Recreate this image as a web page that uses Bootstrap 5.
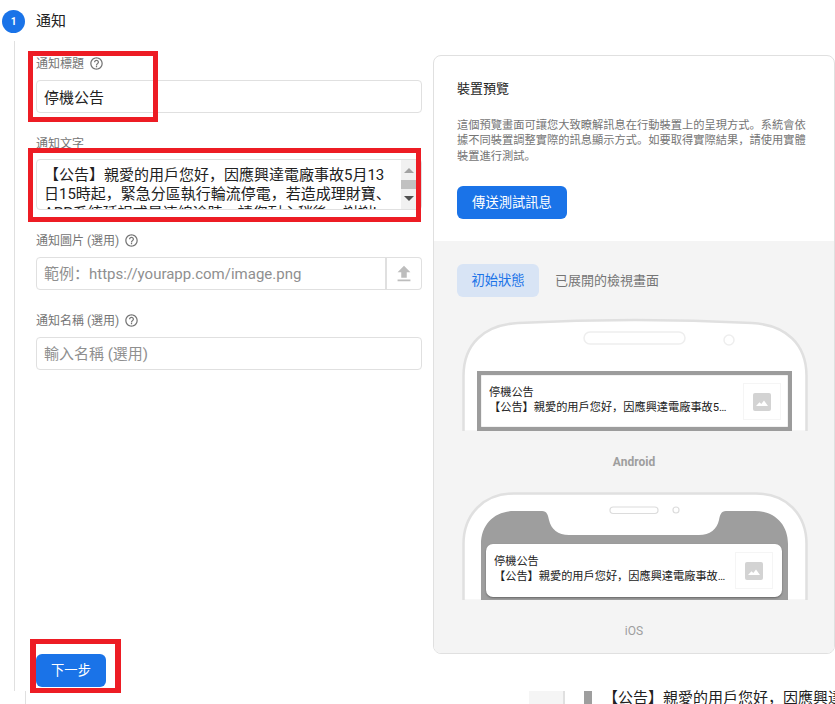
<!DOCTYPE html>
<html lang="zh">
<head>
<meta charset="utf-8">
<title>通知</title>
<link href="https://cdn.jsdelivr.net/npm/bootstrap@5.3.0/dist/css/bootstrap.min.css" rel="stylesheet">
<style>
html,body{height:704px;overflow:hidden;background:#fff}
body{font-family:Roboto,"Noto Sans CJK SC",sans-serif;color:#212121;font-size:15px}
.page-wrap{width:835px;height:704px;position:relative;overflow:hidden}
.step-head{height:41px;padding:10px 0 0 2px;gap:11px}
.step-dot{width:23px;height:23px;border-radius:50%;background:#1a73e8;color:#fff;font-size:10px;font-weight:700}
.step-title{font-size:15px;line-height:23px;color:#212121}
.step-body{margin-left:14px;border-left:1px solid #e0e0e0;height:650px;padding:14px 0 0 21px}
.form-side{width:386px;margin-right:11px}
.fld-label{font-size:12px;line-height:14px;color:#757575;margin:0 0 9px;height:16px;padding-top:2px;gap:5px}
.fld-block{margin-bottom:22px}
.help-ico{width:15px;height:15px;fill:#757575;margin-top:-2px}
.fld-input.form-control{height:33px;font-size:15px;padding:0 7px;border:1px solid #e0e0e0;border-radius:4px;color:#212121;box-shadow:none;line-height:31px}
.fld-input.form-control::placeholder{color:#8f8f8f;opacity:1}
.upload-cell.input-group-text{width:37px;padding:0;justify-content:center;background:#fff;border:1px solid #e0e0e0;border-left-width:2px;border-radius:0 4px 4px 0}
.upload-cell svg{width:22px;height:22px;fill:#bdbdbd}
.msg-box{height:51px;border:1px solid #e0e0e0;border-radius:4px;overflow:hidden;margin-top:-1px}
.msg-text{width:364px;padding:6px 0 0 7px;font-size:15px;line-height:19px;color:#212121;overflow:hidden}
.msg-text span{display:block;width:352px}
.fake-scroll{width:15px;background:#f1f1f1;flex:none;padding-top:8px;height:100%;gap:7px;margin-right:5px}
.arr-up{width:0;height:0;border:5px solid transparent;border-top:0;border-bottom:5px solid #a3a3a3;margin:0 auto}
.arr-down{width:0;height:0;border:5px solid transparent;border-bottom:0;border-top:5px solid #505050;margin:0 auto}
.thumb-bar{height:9px;background:#c1c1c1}
.gap-next{height:33px}
.act-btn.btn{background:#1a73e8;border:0;color:#fff;border-radius:6px;font-size:13.3px;height:33px;padding:0;line-height:33px}
.next-btn{width:70px}
.send-btn{width:110px}
.preview-panel{width:402px;height:599px;border:1px solid #e0e0e0;border-radius:8px;overflow:hidden;background:#fff}
.preview-top{height:185px;padding:23px 23px 0}
.preview-title{font-size:13px;line-height:20px;color:#212121;margin:0 0 19px}
.preview-desc{font-size:11.25px;line-height:15.4px;color:#757575;margin:0 0 22px;width:354px}
.preview-low{background:#f4f4f4;height:413px;padding-top:23px}
.tab-row{padding-left:23px;gap:16px}
.tab-on{width:82px;height:33px;border-radius:6px;background:#d8e4f5;color:#1a73e8;font-size:13.3px}
.tab-off{height:33px;color:#757575;font-size:13px}
.phone-a{width:346px;height:113px;margin:21px 0 0 28px;position:relative;overflow:hidden;padding:53px 0 0 15px}
.phone-i{width:346px;height:108px;margin:20px 0 0 28px;position:relative;overflow:hidden;padding:52px 0 0 24px}
.phone-art{position:absolute;left:0;top:0}
.note-a{position:relative;width:315px;height:60px;border:4px solid #9c9c9c;background:#fff;padding:8px 7px 0 8px;box-shadow:inset 0 0 1px #777}
.note-i{position:relative;width:296px;height:53px;border-radius:7px;background:#fff;padding:8px 9px 0 8px;box-shadow:0 1px 2px rgba(0,0,0,.35)}
.note-copy{font-size:11.2px;line-height:15px;color:#212121;min-width:0;padding-top:2px}
.note-a .note-copy{width:240px}
.note-i .note-copy{width:236px}
.img-cell{width:38px;height:37px;border:1px solid #f5f5f5;margin-left:auto}
.img-cell svg{width:18px;height:18px}
.dev-name{font-size:12px;line-height:20px;color:#9e9e9e;text-align:center;margin-top:21px;height:20px}
.dev-bold{font-weight:700}
.dev-ios{margin-top:21px}
.next-strip{height:13px;margin-left:25px;border-left:1px solid #e0e0e0;padding-left:503px}
.strip-box{width:36px;height:13px;background:#f5f5f5;border-right:2px solid #e0e0e0;margin-right:19px}
.strip-bar{width:8px;height:13px;background:#9e9e9e;margin-right:11px}
.strip-text{font-size:15px;line-height:19px;white-space:nowrap;color:#212121;margin-top:-2px}
.red-mark{position:absolute;border:5px solid #ed1c24;pointer-events:none}
.mark-a{left:28px;top:51px;width:130px;height:71px}
.mark-b{left:28px;top:148px;width:393px;height:74px}
.mark-c{left:30px;top:639px;width:91px;height:54px;border-width:5px 6px}
</style>
</head>
<body>
<div class="page-wrap">
  <div class="step-head d-flex align-items-start">
    <div class="step-dot d-flex align-items-center justify-content-center flex-shrink-0">1</div>
    <div class="step-title">通知</div>
  </div>
  <div class="step-body">
    <div class="d-flex">
      <div class="form-side d-flex flex-column">
        <div class="fld-block">
          <div class="fld-label d-flex align-items-center">通知標題
            <svg class="help-ico" viewBox="0 0 24 24"><path d="M11 18h2v-2h-2v2zm1-16C6.48 2 2 6.48 2 12s4.48 10 10 10 10-4.48 10-10S17.52 2 12 2zm0 18c-4.41 0-8-3.59-8-8s3.59-8 8-8 8 3.59 8 8-3.59 8-8 8zm0-14c-2.21 0-4 1.79-4 4h2c0-1.1.9-2 2-2s2 .9 2 2c0 2-3 1.75-3 5h2c0-2.25 3-2.5 3-5 0-2.21-1.79-4-4-4z"/></svg>
          </div>
          <input class="form-control fld-input" type="text" value="停機公告">
        </div>
        <div class="fld-block">
          <div class="fld-label d-flex align-items-center">通知文字</div>
          <div class="msg-box d-flex justify-content-between">
            <div class="msg-text"><span>【公告】親愛的用戶您好，因應興達電廠事故5月13日15時起，緊急分區執行輪流停電，若造成理財寶、APP系統延誤或是連線逾時，請您耐心稍後，謝謝!</span></div>
            <div class="fake-scroll d-flex flex-column">
              <div class="arr-up"></div>
              <div class="thumb-bar"></div>
              <div class="arr-down"></div>
            </div>
          </div>
        </div>
        <div class="fld-block">
          <div class="fld-label d-flex align-items-center">通知圖片 (選用)
            <svg class="help-ico" viewBox="0 0 24 24"><path d="M11 18h2v-2h-2v2zm1-16C6.48 2 2 6.48 2 12s4.48 10 10 10 10-4.48 10-10S17.52 2 12 2zm0 18c-4.41 0-8-3.59-8-8s3.59-8 8-8 8 3.59 8 8-3.59 8-8 8zm0-14c-2.21 0-4 1.79-4 4h2c0-1.1.9-2 2-2s2 .9 2 2c0 2-3 1.75-3 5h2c0-2.25 3-2.5 3-5 0-2.21-1.79-4-4-4z"/></svg>
          </div>
          <div class="input-group">
            <input class="form-control fld-input" type="text" placeholder="範例：https://yourapp.com/image.png">
            <span class="input-group-text upload-cell"><svg viewBox="0 0 24 24"><path d="M9 16h6v-6h4l-7-7-7 7h4zm-4 2h14v2H5z"/></svg></span>
          </div>
        </div>
        <div class="fld-block">
          <div class="fld-label d-flex align-items-center">通知名稱 (選用)
            <svg class="help-ico" viewBox="0 0 24 24"><path d="M11 18h2v-2h-2v2zm1-16C6.48 2 2 6.48 2 12s4.48 10 10 10 10-4.48 10-10S17.52 2 12 2zm0 18c-4.41 0-8-3.59-8-8s3.59-8 8-8 8 3.59 8 8-3.59 8-8 8zm0-14c-2.21 0-4 1.79-4 4h2c0-1.1.9-2 2-2s2 .9 2 2c0 2-3 1.75-3 5h2c0-2.25 3-2.5 3-5 0-2.21-1.79-4-4-4z"/></svg>
          </div>
          <input class="form-control fld-input" type="text" placeholder="輸入名稱 (選用)">
        </div>
      </div>
      <div class="preview-panel flex-shrink-0">
        <div class="preview-top">
          <div class="preview-title">裝置預覽</div>
          <p class="preview-desc">這個預覽畫面可讓您大致瞭解訊息在行動裝置上的呈現方式。系統會依據不同裝置調整實際的訊息顯示方式。如要取得實際結果，請使用實體裝置進行測試。</p>
          <button class="btn act-btn send-btn" type="button">傳送測試訊息</button>
        </div>
        <div class="preview-low">
          <div class="tab-row d-flex align-items-center">
            <div class="tab-on d-flex align-items-center justify-content-center">初始狀態</div>
            <div class="tab-off d-flex align-items-center">已展開的檢視畫面</div>
          </div>
          <div class="phone-a">
            <svg class="phone-art" width="346" height="113" viewBox="0 0 346 113"><path d="M1.5 114V58C1.5 26 22 7 56 5Q173 -1 290 5C324 7 344.5 26 344.5 58V114Z" fill="#fff" stroke="#e0e0e0" stroke-width="2.5"/><rect x="122" y="14" width="101" height="12" rx="6" fill="#fff" stroke="#eeeeee" stroke-width="1.5"/><circle cx="267" cy="22" r="5" fill="#fff" stroke="#eeeeee" stroke-width="1.5"/></svg>
            <div class="note-a d-flex">
              <div class="note-copy">
                <div class="text-truncate">停機公告</div>
                <div class="text-truncate">【公告】親愛的用戶您好，因應興達電廠事故5月13日15時起，緊急分區</div>
              </div>
              <div class="img-cell d-flex align-items-center justify-content-center flex-shrink-0">
                <svg viewBox="0 0 18 18"><rect width="18" height="18" rx="2" fill="#d3d3d3"/><path d="M3 13L6.5 9.2 8.3 11 11 7.5 15 13Z" fill="#fff"/></svg>
              </div>
            </div>
          </div>
          <div class="dev-name dev-bold">Android</div>
          <div class="phone-i">
            <svg class="phone-art" width="346" height="108" viewBox="0 0 346 108"><path d="M1.5 109V52C1.5 22 22 1.5 52 1.5H294C324 1.5 344.5 22 344.5 52V109Z" fill="#fff" stroke="#e0e0e0" stroke-width="2.5"/><path d="M19 108V52C19 32 33 19 52 19H80C85 19 86 23 87 28 89 37 96 43 107 43H237C248 43 255 37 257 28 258 23 259 19 264 19H293C312 19 326 32 326 52V108Z" fill="#9e9e9e"/><rect x="148" y="15" width="48" height="6.5" rx="3.2" fill="#fff" stroke="#dcdcdc" stroke-width="1.2"/><circle cx="214" cy="18" r="3" fill="#fff" stroke="#dcdcdc" stroke-width="1.2"/></svg>
            <div class="note-i d-flex">
              <div class="note-copy">
                <div class="text-truncate">停機公告</div>
                <div class="text-truncate">【公告】親愛的用戶您好，因應興達電廠事故5月13日15時起，緊急分區</div>
              </div>
              <div class="img-cell d-flex align-items-center justify-content-center flex-shrink-0">
                <svg viewBox="0 0 18 18"><rect width="18" height="18" rx="2" fill="#d3d3d3"/><path d="M3 13L6.5 9.2 8.3 11 11 7.5 15 13Z" fill="#fff"/></svg>
              </div>
            </div>
          </div>
          <div class="dev-name dev-ios">iOS</div>
        </div>
      </div>
    </div>
    <div class="gap-next">
      <button class="btn act-btn next-btn" type="button">下一步</button>
    </div>
  </div>
  <div class="next-strip d-flex align-items-start">
    <div class="strip-box flex-shrink-0"></div>
    <div class="strip-bar flex-shrink-0"></div>
    <div class="strip-text">【公告】親愛的用戶您好，因應興達電廠事故5月13日</div>
  </div>
  <div class="red-mark mark-a"></div>
  <div class="red-mark mark-b"></div>
  <div class="red-mark mark-c"></div>
</div>
<script src="https://cdn.jsdelivr.net/npm/bootstrap@5.3.0/dist/js/bootstrap.bundle.min.js"></script>
</body>
</html>
